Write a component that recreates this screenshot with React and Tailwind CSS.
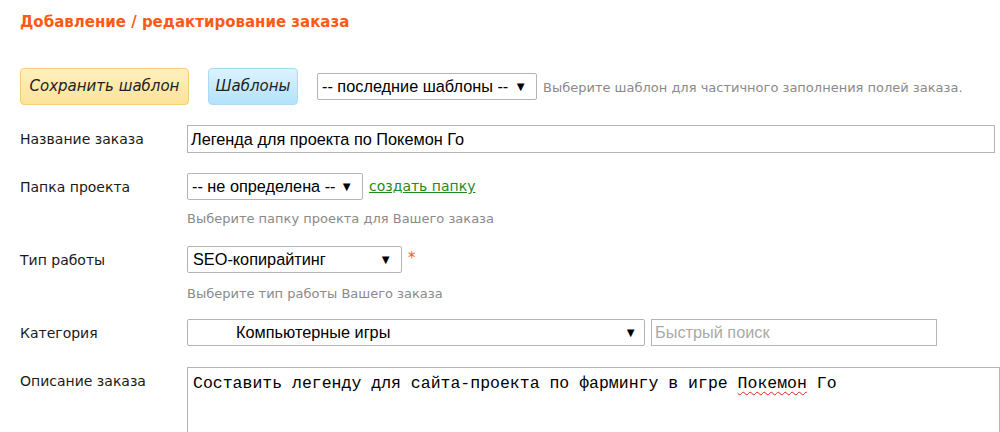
import React from "react";

const SANS = "font-['Tahoma','DejaVu_Sans','Noto_Sans',sans-serif]";
const ARIAL = "font-['Liberation_Sans','Arial',sans-serif]";

function Arrow() {
  return <span className="text-[13px] text-black leading-none">▼</span>;
}

function Label({ children }) {
  return (
    <div className={`w-[167px] shrink-0 text-[14px] text-[#1a1a1a] ${SANS} pt-[4px]`}>{children}</div>
  );
}

function Hint({ children, className = "" }) {
  return <div className={`text-[13px] text-[#8a8a8a] ${SANS} ${className}`}>{children}</div>;
}

export default function App() {
  return (
    <div className="w-[1000px] h-[432px] overflow-hidden bg-white pl-[20px] pt-[12px]">
      <h1 className={`text-[15px] font-bold text-[#ff5a14] ${SANS} leading-[20px]`}>
        Добавление / редактирование заказа
      </h1>

      <div className="flex items-center mt-[36px] h-[37px]">
        <div className={`h-[37px] w-[169px] flex items-center justify-center rounded-[4px] border border-[#f3d07a] bg-gradient-to-b from-[#fff0bd] to-[#fde29b] italic text-[15px] text-[#222] ${SANS}`}>
          Сохранить шаблон
        </div>
        <div className={`ml-[19px] h-[37px] w-[90px] flex items-center justify-center rounded-[4px] border border-[#a9dcf4] bg-gradient-to-b from-[#dcf3ff] to-[#b2e2fb] italic text-[15px] text-[#222] ${SANS}`}>
          Шаблоны
        </div>
        <div className={`ml-[19px] h-[27px] w-[220px] flex items-center justify-between border border-[#b5b5b5] rounded-[2px] pl-[4px] pr-[9px] text-[16.3px] text-black ${ARIAL}`}>
          <span>-- последние шаблоны --</span>
          <Arrow />
        </div>
        <Hint className="ml-[6px] mt-[2px]">Выберите шаблон для частичного заполнения полей заказа.</Hint>
      </div>

      <div className="flex mt-[20px]">
        <Label>Название заказа</Label>
        <div className={`h-[28px] w-[808px] border border-[#b5b5b5] flex items-center pl-[3px] text-[16.3px] text-black ${ARIAL}`}>
          Легенда для проекта по Покемон Го
        </div>
      </div>

      <div className="flex mt-[20px]">
        <Label>Папка проекта</Label>
        <div>
          <div className="flex items-center">
            <div className={`h-[27px] w-[176px] flex items-center justify-between border border-[#b5b5b5] rounded-[2px] pl-[4px] pr-[9px] text-[16.3px] text-black ${ARIAL}`}>
              <span>-- не определена --</span>
              <Arrow />
            </div>
            <a className={`ml-[6px] text-[14px] text-[#1f8a1f] underline ${SANS}`}>создать папку</a>
          </div>
          <Hint className="mt-[9px]">Выберите папку проекта для Вашего заказа</Hint>
        </div>
      </div>

      <div className="flex mt-[17px]">
        <Label>Тип работы</Label>
        <div>
          <div className="flex items-start">
            <div className={`h-[27px] w-[215px] flex items-center justify-between border border-[#b5b5b5] rounded-[2px] pl-[5px] pr-[9px] text-[16.3px] text-black ${ARIAL}`}>
              <span>SEO-копирайтинг</span>
              <Arrow />
            </div>
            <span className={`ml-[6px] text-[15px] text-[#ff5a14] leading-none mt-[5px] ${SANS}`}>*</span>
          </div>
          <Hint className="mt-[11px]">Выберите тип работы Вашего заказа</Hint>
        </div>
      </div>

      <div className="flex mt-[16px]">
        <Label>Категория</Label>
        <div className="flex items-center">
          <div className={`h-[27px] w-[458px] flex items-center justify-between border border-[#b5b5b5] rounded-[2px] pl-[48px] pr-[7px] text-[16.3px] text-black ${ARIAL}`}>
            <span>Компьютерные игры</span>
            <Arrow />
          </div>
          <div className={`ml-[6px] h-[27px] w-[286px] border border-[#b5b5b5] flex items-center pl-[3px] text-[16.3px] text-[#a9a9a9] ${ARIAL}`}>
            Быстрый поиск
          </div>
        </div>
      </div>

      <div className="flex mt-[21px]">
        <Label>Описание заказа</Label>
        <div className={`h-[80px] w-[820px] border border-[#b5b5b5] pl-[5px] pt-[4px] text-[16.5px] text-black ${"font-['Liberation_Mono','Courier_New',monospace]"}`}>
          Составить легенду для сайта-проекта по фармингу в игре{" "}
          <span className="underline decoration-wavy decoration-[#e02020] decoration-1 underline-offset-[3px]">Покемон</span> Го
        </div>
      </div>
    </div>
  );
}
